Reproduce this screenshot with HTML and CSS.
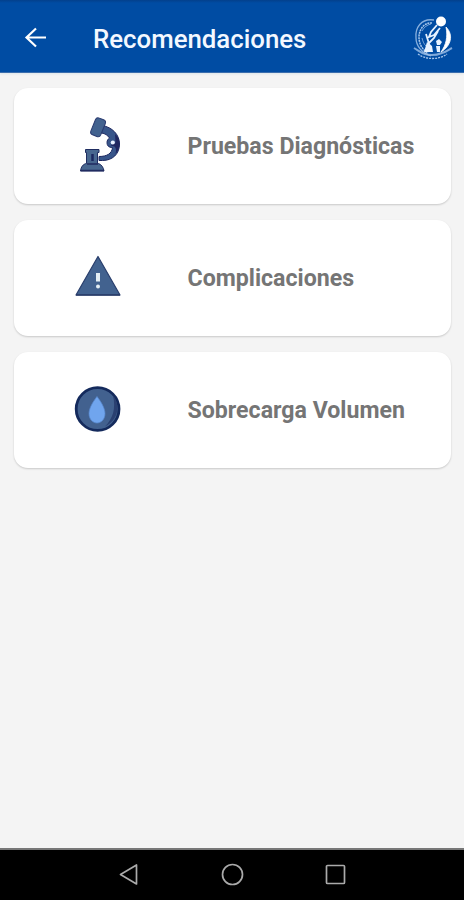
FILE: index.html
```html
<!DOCTYPE html>
<html lang="es">
<head>
<meta charset="utf-8">
<title>Recomendaciones</title>
<link rel="stylesheet" href="styles.css">
</head>
<body>
<header class="bar">
  <svg class="back" width="24" height="24" viewBox="0 0 24 24"><path d="M22 11.500H3.500M12 2.500L2.500 11.500l9.500 9"/></svg>
  <h1 class="title">Recomendaciones</h1>
  <svg class="logo" width="44" height="48" viewBox="410 14 44 48">
    <g fill="none" stroke="#a9c8ec">
      <path d="M434 20C421 18 415 28 416 38c0 8 6 15 15 18" stroke-width="1.300" opacity=".8"/>
      <path d="M432 23C424 22 419 30 419 37c0 8 4 13 9 16" stroke-width="1.500" stroke-dasharray="2 .7"/>
      <path d="M414 48c5 3 7 5 11 6 6 2 12 1 17-1 4-1 6-3 10-5" stroke-width="2" opacity=".75"/>
      <path d="M418 54c8 6 21 6 29 0" stroke-width="1.300" stroke-dasharray="2 1"/>
      <path d="M422 31c2-4 5-6 9-7M422 38c1 4 2 6 4 8" stroke-width="1" opacity=".7"/>
    </g>
    <circle cx="441" cy="21.500" r="5" fill="#fff"/>
    <path d="M446 27c8 8 5 19-5 25 5-7 7-15 5-25z" fill="#fff" stroke="#fff" stroke-width=".8"/>
    <path d="M437 25l-6 7-2 5 5-2 6-7M438 31l-4 7-5 5M426 34l4 13" fill="none" stroke="#e8f3ff" stroke-width="1.800"/>
    <path d="M427 42l5 4 1 6h-9zM436 41l3-2 3 3-2 3h-3zM436 46h4v6h-3z" fill="#e8f3ff"/>
  </svg>
</header>
<main class="list">
  <a class="card">
    <svg class="icon" width="56" height="64" viewBox="70 114 56 64">
      <path d="M102 125.500c10 1.500 17.500 9 17.500 18.500 0 10-7 16.500-17 16.500h-3.500v-4c8 0 13-3 13.500-9-4 0-5.500-2-5.500-5 0-2 1-3.500 2.500-4.500-2-3-4.500-4.500-8-5z" fill="#37558a" stroke="#1d2860" stroke-width="1"/>
      <path d="M115 134c3.500 3 4.500 6 4.500 10 0 4-1.500 7-4 10 1-4 .5-6-1-7.500l-4-1 5-3z" fill="#202760"/>
      <circle cx="112.800" cy="142.500" r="2.100" fill="#e9f1ff"/>
      <rect x="92.700" y="118.300" width="10.600" height="18" rx="3" transform="rotate(22 98 127.500)" fill="#42628f" stroke="#293a70"/>
      <path d="M85.500 149.500h13.500v3h-1.500v11h1c3 1 5 4 5.500 7.500H80.500c.5-4 2.500-7 6-7.500v-11h-1z" fill="#48678f" stroke="#1f2d61"/>
      <path d="M87 164h11M80.500 170.500h23.500" stroke="#202b60" stroke-width="1.500"/>
      <path d="M92.500 154v7" stroke="#1b2860" stroke-width="2.500"/>
    </svg>
    <span class="label">Pruebas Diagnósticas</span>
  </a>
  <a class="card">
    <svg class="icon" width="56" height="64" viewBox="70 246 56 64">
      <path d="M98 256.500l22 38.500H76z" fill="#42628f" stroke="#293e6c" stroke-width="1.200" stroke-linejoin="round"/>
      <path d="M76 295h44" stroke="#293b68" stroke-width="1.500"/>
      <path d="M96 273h4v8.500h-4z" fill="#e4eef4"/>
      <circle cx="98" cy="286.500" r="2" fill="#e4eef4"/>
    </svg>
    <span class="label">Complicaciones</span>
  </a>
  <a class="card">
    <svg class="icon" width="56" height="64" viewBox="70 378 56 64">
      <circle cx="97.600" cy="409" r="21.400" fill="#42618f" stroke="#142a5c" stroke-width="2.800"/>
      <path d="M113 395.500c8 10 5 25-8 31 8-8 11-18 8-31z" fill="#2a4071"/>
      <path d="M97 396.500c3 4 8 11 8 17 0 6-4 9.500-8 9.500s-8-3.500-8-9.500c0-6 5-13 8-17z" fill="#70a5ee" stroke="#5788ce" stroke-width=".7"/>
    </svg>
    <span class="label">Sobrecarga Volumen</span>
  </a>
</main>
<nav class="nav">
  <svg width="24" height="24" viewBox="0 0 24 24"><path d="M3.500 11.500L19.500 2v19z"/></svg>
  <svg width="24" height="24" viewBox="0 0 24 24"><circle cx="12.500" cy="11.500" r="10"/></svg>
  <svg width="24" height="24" viewBox="0 0 24 24"><rect x="3.500" y="2.500" width="18" height="18" rx="1"/></svg>
</nav>
</body>
</html>
```
FILE: styles.css
```css
* {
  box-sizing: border-box;
}

body {
  margin: 0;
  height: 900px;
  display: flex;
  flex-direction: column;
  background: #f4f4f4;
  font-family: Roboto, sans-serif;
}

.bar {
  height: 73px;
  padding: 4px 10px 0 24px;
  display: flex;
  align-items: center;
  background: linear-gradient(#03408c 0, #004ca3 3px);
  border-bottom: 1px solid #3b6dad;
  box-shadow: 0 1px 2px #dce5ea;
}

.back {
  fill: none;
  stroke: #fff;
  stroke-width: 2.2;
}

.title {
  flex: 1;
  margin: 2px 0 0 45px;
  color: #f3f8ff;
  font-size: 25.8px;
  font-weight: 500;
  line-height: 32px;
  white-space: nowrap;
}

.logo {
  flex: none;
}

.list {
  flex: 1;
  display: flex;
  flex-direction: column;
  gap: 16px;
  padding: 15px 13px 0 14px;
}

.card {
  height: 116px;
  display: flex;
  align-items: center;
  padding-left: 56px;
  background: #fff;
  border-radius: 14px;
  box-shadow: 0 1px 2px rgba(0, 0, 0, .18);
}

.label {
  margin: 2px 0 0 61.5px;
  color: #757575;
  font-size: 23.15px;
  font-weight: 700;
  line-height: 28px;
  white-space: nowrap;
}

.nav {
  height: 52px;
  border-top: 2px solid #777;
  background: #000;
  display: flex;
  align-items: center;
  justify-content: center;
  gap: 79px;
}

.nav svg {
  fill: none;
  stroke: #aaa;
  stroke-width: 1.7;
  stroke-linejoin: round;
}
```
